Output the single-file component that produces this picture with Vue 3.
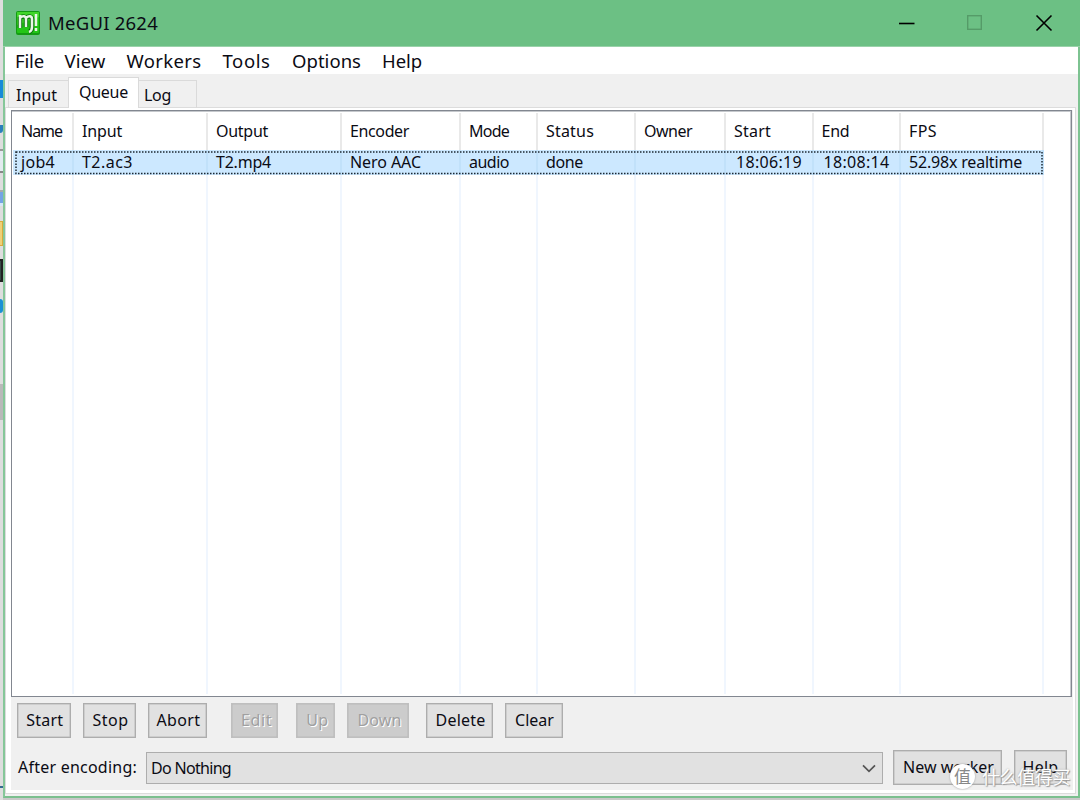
<script setup>
const menus = [
  { t: 'File', x: 12, w: 28 },
  { t: 'View', x: 61, w: 40 },
  { t: 'Workers', x: 123, w: 74 },
  { t: 'Tools', x: 219, w: 47 },
  { t: 'Options', x: 289, w: 68 },
  { t: 'Help', x: 380, w: 39 },
]
const columns = [
  { t: 'Name', w: 40, v: 'job4', vw: 33 },
  { t: 'Input', w: 39, v: 'T2.ac3', vw: 50 },
  { t: 'Output', w: 51, v: 'T2.mp4', vw: 54 },
  { t: 'Encoder', w: 58, v: 'Nero AAC', vw: 70 },
  { t: 'Mode', w: 39, v: 'audio', vw: 39 },
  { t: 'Status', w: 47, v: 'done', vw: 36 },
  { t: 'Owner', w: 47, v: '', vw: 0 },
  { t: 'Start', w: 36, v: '18:06:19', vw: 65, shift: true },
  { t: 'End', w: 27, v: '18:08:14', vw: 65, shift: true },
  { t: 'FPS', w: 27, v: '52.98x realtime', vw: 112 },
]
const buttons = [
  { t: 'Start', w: 36, c: 'start' },
  { t: 'Stop', w: 35, c: 'stop' },
  { t: 'Abort', w: 43, c: 'abort' },
  { t: 'Edit', w: 30, c: 'edit', off: true },
  { t: 'Up', w: 21, c: 'up', off: true },
  { t: 'Down', w: 43, c: 'down', off: true },
  { t: 'Delete', w: 49, c: 'delete' },
  { t: 'Clear', w: 38, c: 'clear' },
]
// Tracks a label so that it fills the given width
const vFit = {
  mounted(el, { value }) {
    if (!value) return
    const w = el.getBoundingClientRect().width
    el.style.letterSpacing = (value + 1 - w) / el.textContent.length + 'px'
  },
}
</script>

<template>
  <div class="screen">
    <div class="desktop">
      <i class="d blue1"></i><i class="d blue2"></i><i class="d doc"></i><i class="d drive"></i>
      <i class="d folder"></i><i class="d dark"></i><i class="d round"></i><i class="d gray"></i>
      <i class="d speck"></i>
    </div>
    <div class="window">
      <header class="title">
        <svg class="logo" width="24" height="24" viewBox="0 0 24 24">
          <rect x="0" y="0" width="24" height="24" rx="2" fill="#139c12" />
          <rect x="1" y="1" width="22" height="21" rx="1" fill="#23c616" />
          <path d="M1 1h22v5L1 14z" fill="#52df35" opacity=".65" />
          <path d="M4 17V6M4 7c3-3 6-1 6 1v8M10 7c3-3 6-1 6 1v8q0 4-3 5" fill="none" stroke="#08750a" stroke-width="4.5" />
          <path d="M4 17V4M4 7c3-3 6-2 6 1v8M10 7c3-3 6-2 6 1v8q0 4-3 5M20 3v12M20 17v3" fill="none" stroke="#e9f5e7" stroke-width="2.5" />
        </svg>
        <span class="caption"><span v-fit="109">MeGUI 2624</span></span>
        <div class="controls">
          <svg width="160" height="20" viewBox="0 0 160 20">
            <path d="M1 10.5h15.5" stroke="#000" stroke-width="1.6" />
            <rect x="69.7" y="2.7" width="13.6" height="13.6" fill="none" stroke="#559b68" stroke-width="1.4" />
            <path d="M138.5 2.5l15 15M153.5 2.5l-15 15" stroke="#000" stroke-width="1.6" />
          </svg>
        </div>
      </header>
      <nav class="menu">
        <span v-for="m in menus" :key="m.t" class="mi" :class="m.t.toLowerCase()"><span v-fit="m.w">{{ m.t }}</span></span>
      </nav>
      <div class="tabs">
        <div class="tab t-input"><span v-fit="40">Input</span></div>
        <div class="tab active"><span v-fit="48">Queue</span></div>
        <div class="tab t-log"><span v-fit="26">Log</span></div>
      </div>
      <main class="page">
        <div class="list">
          <div v-for="c in columns" :key="c.t" class="col">
            <div class="head"><span v-fit="c.w">{{ c.t }}</span></div>
            <div class="cell" :class="{ shift: c.shift }"><span v-fit="c.vw">{{ c.v }}</span></div>
          </div>
          <svg class="focus" width="1028" height="24"><rect x="1" y="1" width="1026" height="21.5" fill="none" stroke="#1d2833" stroke-width="1.5" stroke-dasharray="1.5 1.5" /></svg>
        </div>
        <div class="buttons">
          <button v-for="b in buttons" :key="b.t" class="btn" :class="[b.c, { off: b.off }]"><span v-fit="b.w">{{ b.t }}</span></button>
        </div>
        <div class="after">
          <label class="lbl"><span v-fit="118">After encoding:</span></label>
          <div class="combo">
            <span v-fit="79">Do Nothing</span>
            <svg width="14" height="9" viewBox="0 0 14 9"><path d="M1 1.3l6 6 6-6" fill="none" stroke="#555" stroke-width="1.7" /></svg>
          </div>
          <button class="btn nw"><span v-fit="90">New worker</span></button>
          <button class="btn hp"><span v-fit="35">Help</span></button>
        </div>
      </main>
    </div>
    <div class="mark">
      <div class="badge">值</div>
      <span v-fit="87">什么值得买</span>
    </div>
  </div>
</template>

<style>
html, body { margin: 0; overflow: hidden; }
</style>
<style scoped>
* { box-sizing: border-box; }
.screen {
  position: relative; display: flex; width: 1080px; height: 800px; overflow: hidden; background: #c9c9c9;
  font-family: "Noto Sans", "Open Sans", "Noto Sans CJK SC", sans-serif; font-size: 16px; color: #0b0b14;
  white-space: nowrap;
}
.desktop { position: relative; flex: none; width: 3px; background: #dedede; }
.d { position: absolute; left: 0; width: 3px; }
.blue1 { top: 80px; height: 18px; background: #168bd8; }
.blue2 { top: 125px; height: 8px; background: #2c80bd; border-radius: 0 0 3px 0; }
.doc { top: 149px; height: 24px; background: #e3ebf0; border-top: 2px solid #999; border-bottom: 2px solid #888; }
.drive { top: 190px; height: 16px; background: #75a4e5; border-top: 2px solid #aaa; border-bottom: 3px solid #d4e8f8; }
.folder { top: 221px; height: 25px; background: #efd077; border: 1px solid #d9ac3b; border-left: 0; }
.dark { top: 259px; height: 23px; background: #354b44; border: 2px solid #222; border-left: 0; }
.round { top: 299px; height: 14px; background: #1b91d5; border-radius: 0 5px 5px 0; }
.gray { top: 384px; height: 36px; background: #b9b9b9; }
.speck { top: 786px; height: 2px; background: #356a91; }
.window {
  display: flex; flex-direction: column; width: 1077px; height: 798px; background: #f0f0f0;
  border-left: 2px solid #86c799; border-right: 2px solid #7dc391; border-bottom: 2px solid #7bbf8e;
}
.title { display: flex; align-items: center; flex: none; height: 47px; margin: 0 -2px; padding-left: 13px; background: #6cc084; border-bottom: 1px solid #9ad2aa; }
.logo { flex: none; margin-top: -1px; }
.caption { margin: -2px 0 0 8px; font-size: 18.5px; }
.controls { margin-left: auto; margin-right: 22px; height: 20px; line-height: 0; }
.menu { flex: none; display: flex; height: 27px; padding-left: 10px; background: #fff; font-size: 18.5px; line-height: 28px; }
.mi { flex: none; }
.file { width: 49.5px; } .view { width: 62px; } .workers { width: 96px; } .tools { width: 69.5px; } .options { width: 90px; }
.tabs { flex: none; display: flex; align-items: flex-end; height: 34px; padding-left: 3px; position: relative; z-index: 1; }
.tab { height: 28px; border: 1px solid #dadada; border-bottom: 0; line-height: 28px; }
.t-input { width: 60px; padding-left: 7px; border-right: 0; }
.active { width: 71px; height: 31px; padding-left: 10px; line-height: 29px; background: #fff; }
.t-log { width: 58px; padding-left: 5px; border-left: 0; }
.page {
  display: flex; flex-direction: column; height: 687px; margin-top: -1px; margin-right: 2px; padding: 2px 3px 0 5px;
  border: 1px solid #dcdcdc; background: #f0f0f0;
  box-shadow: inset 5px 0 #fff, inset -2px 0 #fff, inset 0 2px #fff, inset 0 -3px #fff;
}
.list {
  position: relative; flex: none; display: grid; height: 587px; padding: 2px 0 2px 1px;
  grid-template-columns: 61px 134px 134px 119px 77px 98px 90px 87.5px 87.5px 143px;
  background: #fff; border: 1.5px solid #828790; box-shadow: inset 0 1px #c5c8cc, inset -1px 0 #c5c8cc;
}
.col { border-right: 2px solid #f0f6fe; line-height: 1; }
.head { height: 37px; padding-left: 8px; margin-right: -2px; border-right: 2px solid #e9e9e9; line-height: 37px; }
.cell { height: 25px; margin-right: -2px; padding-left: 8px; line-height: 25px; background: #cce8ff; border-right: 2px solid #c1e1fa; }
.cell.shift { padding-left: 10px; }
.focus { position: absolute; left: 3px; top: 39.5px; }
.buttons { flex: none; display: flex; height: 48px; padding: 6px 0 0 5.5px; }
.btn {
  flex: none; display: block; height: 35px; margin: 0; padding: 0 0 2px; border: 1.5px solid #adadad;
  box-shadow: inset 0 0 0 .5px #b9b9b9; background: #e1e1e1; color: #0b0b14; font: inherit; text-align: center; line-height: 30px; white-space: nowrap;
}
.btn span { position: relative; left: 1px; }
.start { width: 54.5px; } .stop { width: 53px; margin-left: 12px; } .abort { width: 59px; margin-left: 12px; }
.edit { width: 47px; margin-left: 24px; } .up { width: 39.5px; margin-left: 17.5px; } .down { width: 62px; margin-left: 11.5px; }
.delete { width: 67px; margin-left: 17.5px; } .clear { width: 58px; margin-left: 11.5px; }
.off { background: #ccc; border-color: #bfbfbf; color: #a0a0a0; text-shadow: 1px 1px #fff; }
.off span { left: 2px; }
.after { display: flex; padding-left: 6px; margin-top: 5px; }
.lbl { width: 129px; padding-left: 1px; line-height: 34px; }
.combo {
  display: flex; align-items: center; justify-content: space-between; flex: none; width: 737px; height: 32px;
  margin-top: 2px; padding: 0 6px 0 4px; background: #e1e1e1; border: 1.5px solid #adadad;
}
.nw { width: 109px; margin-left: 10px; } .hp { width: 53px; margin-left: 12px; }
.hp span { left: 0; }
.mark {
  position: absolute; left: 950px; top: 764px; display: flex; align-items: center; gap: 7px; color: #fff;
  font-family: "Noto Sans CJK SC", sans-serif; font-size: 18px; line-height: 25px; text-shadow: 1px 1px 1px #999, 0 0 2px #aaa;
}
.badge { width: 25px; height: 25px; border-radius: 50%; background: #fff; color: #888; text-align: center; font-size: 17px; line-height: 24px; text-shadow: none; box-shadow: 0 0 2px #999; }
</style>
